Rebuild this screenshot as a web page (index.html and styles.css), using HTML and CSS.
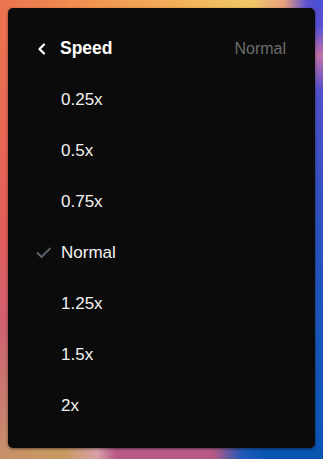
FILE: index.html
```html
<!DOCTYPE html>
<html>
<head>
<meta charset="utf-8">
<link rel="stylesheet" href="styles.css">
</head>
<body>
<div class="bg">
  <div class="menu">
    <div class="header">
      <span class="icon">
        <svg width="10" height="12" viewBox="0 0 10 12"><path d="M7 1.5 L2.5 6 L7 10.5" fill="none" stroke="#fff" stroke-width="2.2" stroke-linecap="round" stroke-linejoin="round"/></svg>
      </span>
      <span class="title">Speed</span>
      <span class="current">Normal</span>
    </div>
    <div class="item"><span class="icon"></span><span>0.25x</span></div>
    <div class="item"><span class="icon"></span><span>0.5x</span></div>
    <div class="item"><span class="icon"></span><span>0.75x</span></div>
    <div class="item"><span class="icon">
      <svg width="16" height="12" viewBox="0 0 16 12"><path d="M1.5 6 L5.5 10 L14 1.5" fill="none" stroke="#5b6270" stroke-width="1.8" stroke-linecap="round" stroke-linejoin="round"/></svg>
    </span><span>Normal</span></div>
    <div class="item"><span class="icon"></span><span>1.25x</span></div>
    <div class="item"><span class="icon"></span><span>1.5x</span></div>
    <div class="item"><span class="icon"></span><span>2x</span></div>
  </div>
</div>
</body>
</html>
```
FILE: styles.css
```css
html, body {
  margin: 0;
  padding: 0;
  width: 323px;
  height: 459px;
  overflow: hidden;
}
.bg {
  width: 323px;
  height: 459px;
  box-sizing: border-box;
  padding: 8px 8px 0 8px;
  background-color: #d07060;
  background-image:
    linear-gradient(90deg, #c8906a 0%, #c89a60 20%, #d8a0a8 30%, #b85a88 36%, #b85a88 66%, #2058b8 75%, #0a55b0 82%, #0a55b0 100%),
    linear-gradient(90deg, #ec7450 0%, #f0904f 25%, #f3b05a 55%, #f0c868 78%, #e8a080 88%, #5a50d0 95%, #4850d8 100%),
    linear-gradient(180deg, #ec7550 0%, #e86a55 25%, #e35d58 50%, #d06070 70%, #c87e70 88%, #c8906a 100%),
    linear-gradient(180deg, #4f4ed4 0%, #5a52d0 6%, #c070a8 12%, #5050cc 20%, #3050c0 45%, #1a55bc 70%, #0a55b8 100%);
  background-repeat: no-repeat;
  background-size: 323px 12px, 323px 9px, 9px 459px, 9px 459px;
  background-position: 0 447px, 0 0, 0 0, 314px 0;
  font-family: "Liberation Sans", Arial, sans-serif;
}
.menu {
  width: 307px;
  height: 440px;
  box-sizing: border-box;
  background: #0b0b0b;
  border-radius: 5px;
  padding: 15px 0 16px 0;
  box-shadow: 0 1px 3px rgba(0,0,0,0.5);
}
.header {
  height: 51px;
  display: flex;
  align-items: center;
  padding: 0 29px 0 26px;
}
.item {
  height: 51px;
  display: flex;
  align-items: center;
  padding: 1px 26px 0 28px;
  box-sizing: border-box;
  color: #f2f2f2;
  font-size: 17px;
}
.icon {
  width: 26px;
  display: flex;
  align-items: center;
  justify-content: flex-start;
}
.item .icon { width: 25px; }
.header .icon { padding-left: 3px; width: 23px; }
.title {
  color: #fff;
  font-weight: bold;
  font-size: 17.5px;
  flex: 1;
}
.current {
  color: #6b6b6b;
  font-size: 16px;
}
```
